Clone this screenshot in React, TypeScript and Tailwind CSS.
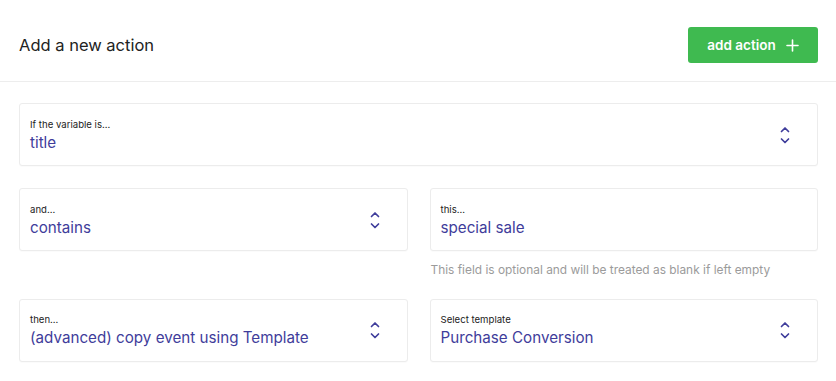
function Chevrons() {
  return (
    <svg width="12" height="24" viewBox="0 0 12 24" fill="none" stroke="#3f3d9b" strokeWidth="1.7" strokeLinecap="round" strokeLinejoin="round">
      <path d="M2.5 8.5 6 5l3.5 3.5" />
      <path d="M2.5 16 6 19.5 9.5 16" />
    </svg>
  )
}

function Field({ label, value, select = true }: { label: string; value: string; select?: boolean }) {
  return (
    <div className="flex h-[63px] items-center justify-between rounded-[3px] border border-[#ececec] bg-white pl-[10px] pr-[26px] shadow-[0_1px_1px_rgba(0,0,0,0.02)]">
      <div className="flex flex-col pt-[2px]">
        <span className="text-[9.6px] leading-[14px] text-[#222]">{label}</span>
        <span className="text-[15.2px] leading-[22px] text-[#3f3d9b]">{value}</span>
      </div>
      {select && <Chevrons />}
    </div>
  )
}

export default function App() {
  return (
    <main className="min-h-screen bg-white font-['Inter','Noto_Sans',sans-serif] text-[#222]">
      <header className="flex items-center justify-between border-b border-[#ededed] pb-[18px] pl-[19px] pr-[18px] pt-[27px]">
        <h1 className="text-[16.5px] font-normal text-[#222]">Add a new action</h1>
        <button className="flex h-[36px] w-[130px] items-center justify-center gap-[10px] rounded-[3px] bg-[#3fba50] text-[13.5px] font-semibold text-white">
          add action
          <svg width="13" height="13" viewBox="0 0 13 13" stroke="white" strokeWidth="1.6" strokeLinecap="round">
            <path d="M6.5 1v11M1 6.5h11" />
          </svg>
        </button>
      </header>
      <section className="flex flex-col gap-[22px] pl-[19px] pr-[18px] pt-[21px]">
        <Field label="If the variable is..." value="title" />
        <div className="grid grid-cols-2 gap-x-[22px]">
          <Field label="and..." value="contains" />
          <div className="flex flex-col">
            <Field label="this..." value="special sale" select={false} />
            <p className="ml-[1px] mt-[10px] text-[11.9px] text-[#9b9b9b]">This field is optional and will be treated as blank if left empty</p>
          </div>
        </div>
        <div className="-mt-[2px] grid grid-cols-2 gap-x-[22px]">
          <Field label="then..." value="(advanced) copy event using Template" />
          <Field label="Select template" value="Purchase Conversion" />
        </div>
      </section>
    </main>
  )
}
